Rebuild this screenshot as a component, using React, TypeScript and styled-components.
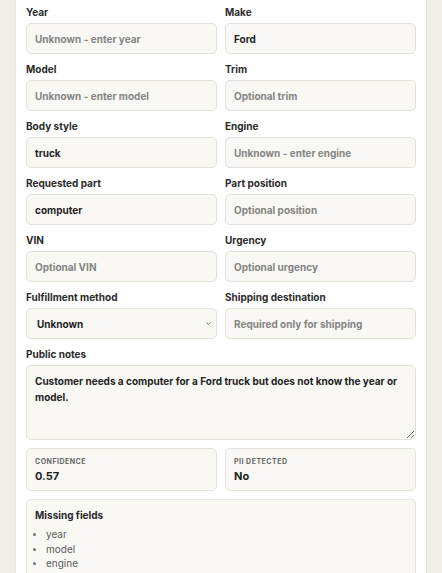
import styled, { createGlobalStyle } from "styled-components";

const GlobalStyle = createGlobalStyle`
  html, body {
    margin: 0;
    padding: 0;
    background: #efeee9;
    font-family: Inter, "Noto Sans", "Liberation Sans", sans-serif;
    color: #222;
  }
`;

const Panel = styled.div`
  width: 410px;
  margin: 0 0 0 16px;
  box-sizing: border-box;
  background: #ffffff;
  padding: 4px 10px 0;
  min-height: 573px;
  box-shadow: 1px 0 0 #e6e4de, -1px 0 0 #ebe9e4;
`;

const Grid = styled.div`
  display: grid;
  grid-template-columns: 1fr 1fr;
  column-gap: 8px;
  row-gap: 7px;
`;

const Field = styled.div<{ $wide?: boolean }>`
  display: flex;
  flex-direction: column;
  min-width: 0;
  grid-column: ${(p) => (p.$wide ? "1 / -1" : "auto")};
`;

const Label = styled.label`
  font-size: 10px;
  line-height: 16px;
  font-weight: 700;
  color: #2b2b2b;
  margin-bottom: 3px;
`;

const Input = styled.input`
  box-sizing: border-box;
  height: 31px;
  width: 100%;
  padding: 0 8px;
  border: 1px solid #e4e1db;
  border-radius: 5px;
  background: #f9f8f5;
  font-family: inherit;
  font-size: 10px;
  font-weight: 700;
  color: #1f1f1f;
  outline: none;

  &::placeholder {
    color: #858583;
    opacity: 1;
  }
`;

const SelectWrap = styled.div`
  position: relative;
`;

const Select = styled.select`
  appearance: none;
  box-sizing: border-box;
  height: 31px;
  width: 100%;
  padding: 0 10px;
  border: 1px solid #e4e1db;
  border-radius: 5px;
  background: #f9f8f5;
  font-family: inherit;
  font-size: 10px;
  font-weight: 700;
  color: #1f1f1f;
  outline: none;
`;

const Chevron = styled.svg`
  position: absolute;
  right: 6px;
  top: 14px;
  pointer-events: none;
`;

const TextArea = styled.textarea`
  box-sizing: border-box;
  height: 75px;
  width: 100%;
  padding: 8px 8px;
  border: 1px solid #e4e1db;
  border-radius: 5px;
  background: #f9f8f5;
  font-family: inherit;
  font-size: 10px;
  line-height: 15.5px;
  font-weight: 700;
  color: #1f1f1f;
  outline: none;
  resize: vertical;
`;

const Stats = styled.div`
  display: grid;
  grid-template-columns: 1fr 1fr;
  column-gap: 8px;
  margin-top: 8px;
`;

const Card = styled.div`
  box-sizing: border-box;
  border: 1px solid #e6e3dd;
  border-radius: 5px;
  background: #f9f8f5;
  padding: 8px 8px 6px;
`;

const StatLabel = styled.div`
  font-size: 7px;
  line-height: 9px;
  font-weight: 700;
  letter-spacing: 0.5px;
  text-transform: uppercase;
  color: #666;
`;

const StatValue = styled.div`
  margin-top: 2px;
  font-size: 11px;
  line-height: 16px;
  font-weight: 700;
  color: #1f1f1f;
`;

const MissingCard = styled(Card)`
  margin-top: 8px;
  padding: 8px 8px 10px;
`;

const Heading = styled.div`
  font-size: 10px;
  line-height: 14px;
  font-weight: 700;
  color: #2a2a2a;
  margin-bottom: 5px;
`;

const List = styled.ul`
  margin: 0;
  padding-left: 11px;
`;

const Item = styled.li`
  font-size: 10px;
  line-height: 14.5px;
  color: #5b5b5b;

  &::marker {
    font-size: 9px;
    color: #777;
  }
`;

const fields: { label: string; placeholder?: string; value?: string }[] = [
  { label: "Year", placeholder: "Unknown - enter year" },
  { label: "Make", value: "Ford" },
  { label: "Model", placeholder: "Unknown - enter model" },
  { label: "Trim", placeholder: "Optional trim" },
  { label: "Body style", value: "truck" },
  { label: "Engine", placeholder: "Unknown - enter engine" },
  { label: "Requested part", value: "computer" },
  { label: "Part position", placeholder: "Optional position" },
  { label: "VIN", placeholder: "Optional VIN" },
  { label: "Urgency", placeholder: "Optional urgency" },
];

export default function App() {
  return (
    <>
      <GlobalStyle />
      <Panel>
        <Grid>
          {fields.map((f) => (
            <Field key={f.label}>
              <Label>{f.label}</Label>
              <Input placeholder={f.placeholder} defaultValue={f.value} />
            </Field>
          ))}
          <Field>
            <Label>Fulfillment method</Label>
            <SelectWrap>
              <Select defaultValue="unknown">
                <option value="unknown">Unknown</option>
                <option value="pickup">Pickup</option>
                <option value="shipping">Shipping</option>
              </Select>
              <Chevron width="5" height="3" viewBox="0 0 5 3">
                <path d="M0.5 0.5 L2.5 2.4 L4.5 0.5" fill="none" stroke="#555" strokeWidth="0.8" />
              </Chevron>
            </SelectWrap>
          </Field>
          <Field>
            <Label>Shipping destination</Label>
            <Input placeholder="Required only for shipping" />
          </Field>
          <Field $wide>
            <Label>Public notes</Label>
            <TextArea defaultValue="Customer needs a computer for a Ford truck but does not know the year or model." />
          </Field>
        </Grid>
        <Stats>
          <Card>
            <StatLabel>Confidence</StatLabel>
            <StatValue>0.57</StatValue>
          </Card>
          <Card>
            <StatLabel>PII detected</StatLabel>
            <StatValue>No</StatValue>
          </Card>
        </Stats>
        <MissingCard>
          <Heading>Missing fields</Heading>
          <List>
            <Item>year</Item>
            <Item>model</Item>
            <Item>engine</Item>
          </List>
        </MissingCard>
      </Panel>
    </>
  );
}
